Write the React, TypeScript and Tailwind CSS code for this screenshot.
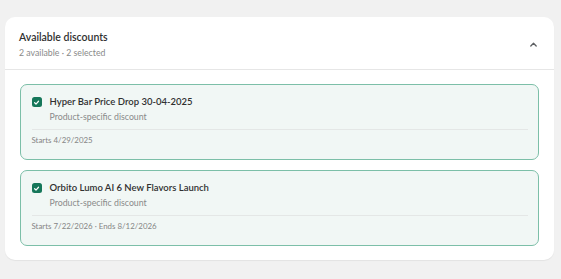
import React from "react";

function Check() {
  return (
    <span className="flex h-[10px] w-[10px] shrink-0 items-center justify-center rounded-[2.5px] bg-[#16775a]">
      <svg width="7" height="7" viewBox="0 0 10 10" fill="none">
        <path d="M2.3 5.3 L4.3 7.2 L7.9 3.2" stroke="white" strokeWidth="1.7" strokeLinecap="round" strokeLinejoin="round" />
      </svg>
    </span>
  );
}

function Discount({ title, footer }: { title: string; footer: string }) {
  return (
    <div className="rounded-[7px] border-[1.5px] border-[#7cbfa8] bg-[#f1f7f5] pl-[10.5px] pr-[10.5px] pt-[10.5px] pb-[11.5px]">
      <div className="flex items-start gap-[8px]">
        <div className="pt-[2px]">
          <Check />
        </div>
        <div className="flex flex-col">
          <span className="text-[9.5px] font-semibold leading-[14px] text-[#303030]">{title}</span>
          <span className="mt-[1px] text-[8.75px] leading-[14px] text-[#8a8a8a]">Product-specific discount</span>
        </div>
      </div>
      <div className="mt-[5px] border-t border-[#e4e7e6]" />
      <div className="pt-[3px] text-[7.9px] leading-[14px] text-[#858585]">{footer}</div>
    </div>
  );
}

export default function App() {
  return (
    <div
      className="min-h-[279px] bg-[#f1f1f1] pl-[5px] pr-[7px] pt-[17px] pb-[19px]"
      style={{ fontFamily: '"Lato", "Noto Sans", sans-serif' }}
    >
      <div className="rounded-[10px] bg-white shadow-[0_1px_1px_rgba(0,0,0,0.06)]">
        <div className="flex items-center justify-between border-b border-[#e6e6e6] pl-[14px] pr-[17px] pt-[12.5px] pb-[8.5px]">
          <div className="flex flex-col">
            <span className="text-[10.5px] font-semibold leading-[14px] text-[#303030]">Available discounts</span>
            <span className="mt-[2.5px] text-[8.75px] leading-[14px] text-[#8a8a8a]">2 available · 2 selected</span>
          </div>
          <svg width="7" height="5" viewBox="0 0 7 5" fill="none" className="mb-[1px]">
            <path d="M0.8 4 L3.5 1.2 L6.2 4" stroke="#5c5f62" strokeWidth="1.3" strokeLinecap="round" strokeLinejoin="round" />
          </svg>
        </div>
        <div className="flex flex-col gap-[10px] px-[15px] pt-[14px] pb-[14px]">
          <Discount title="Hyper Bar Price Drop 30-04-2025" footer="Starts 4/29/2025" />
          <Discount title="Orbito Lumo AI 6 New Flavors Launch" footer="Starts 7/22/2026 · Ends 8/12/2026" />
        </div>
      </div>
    </div>
  );
}
